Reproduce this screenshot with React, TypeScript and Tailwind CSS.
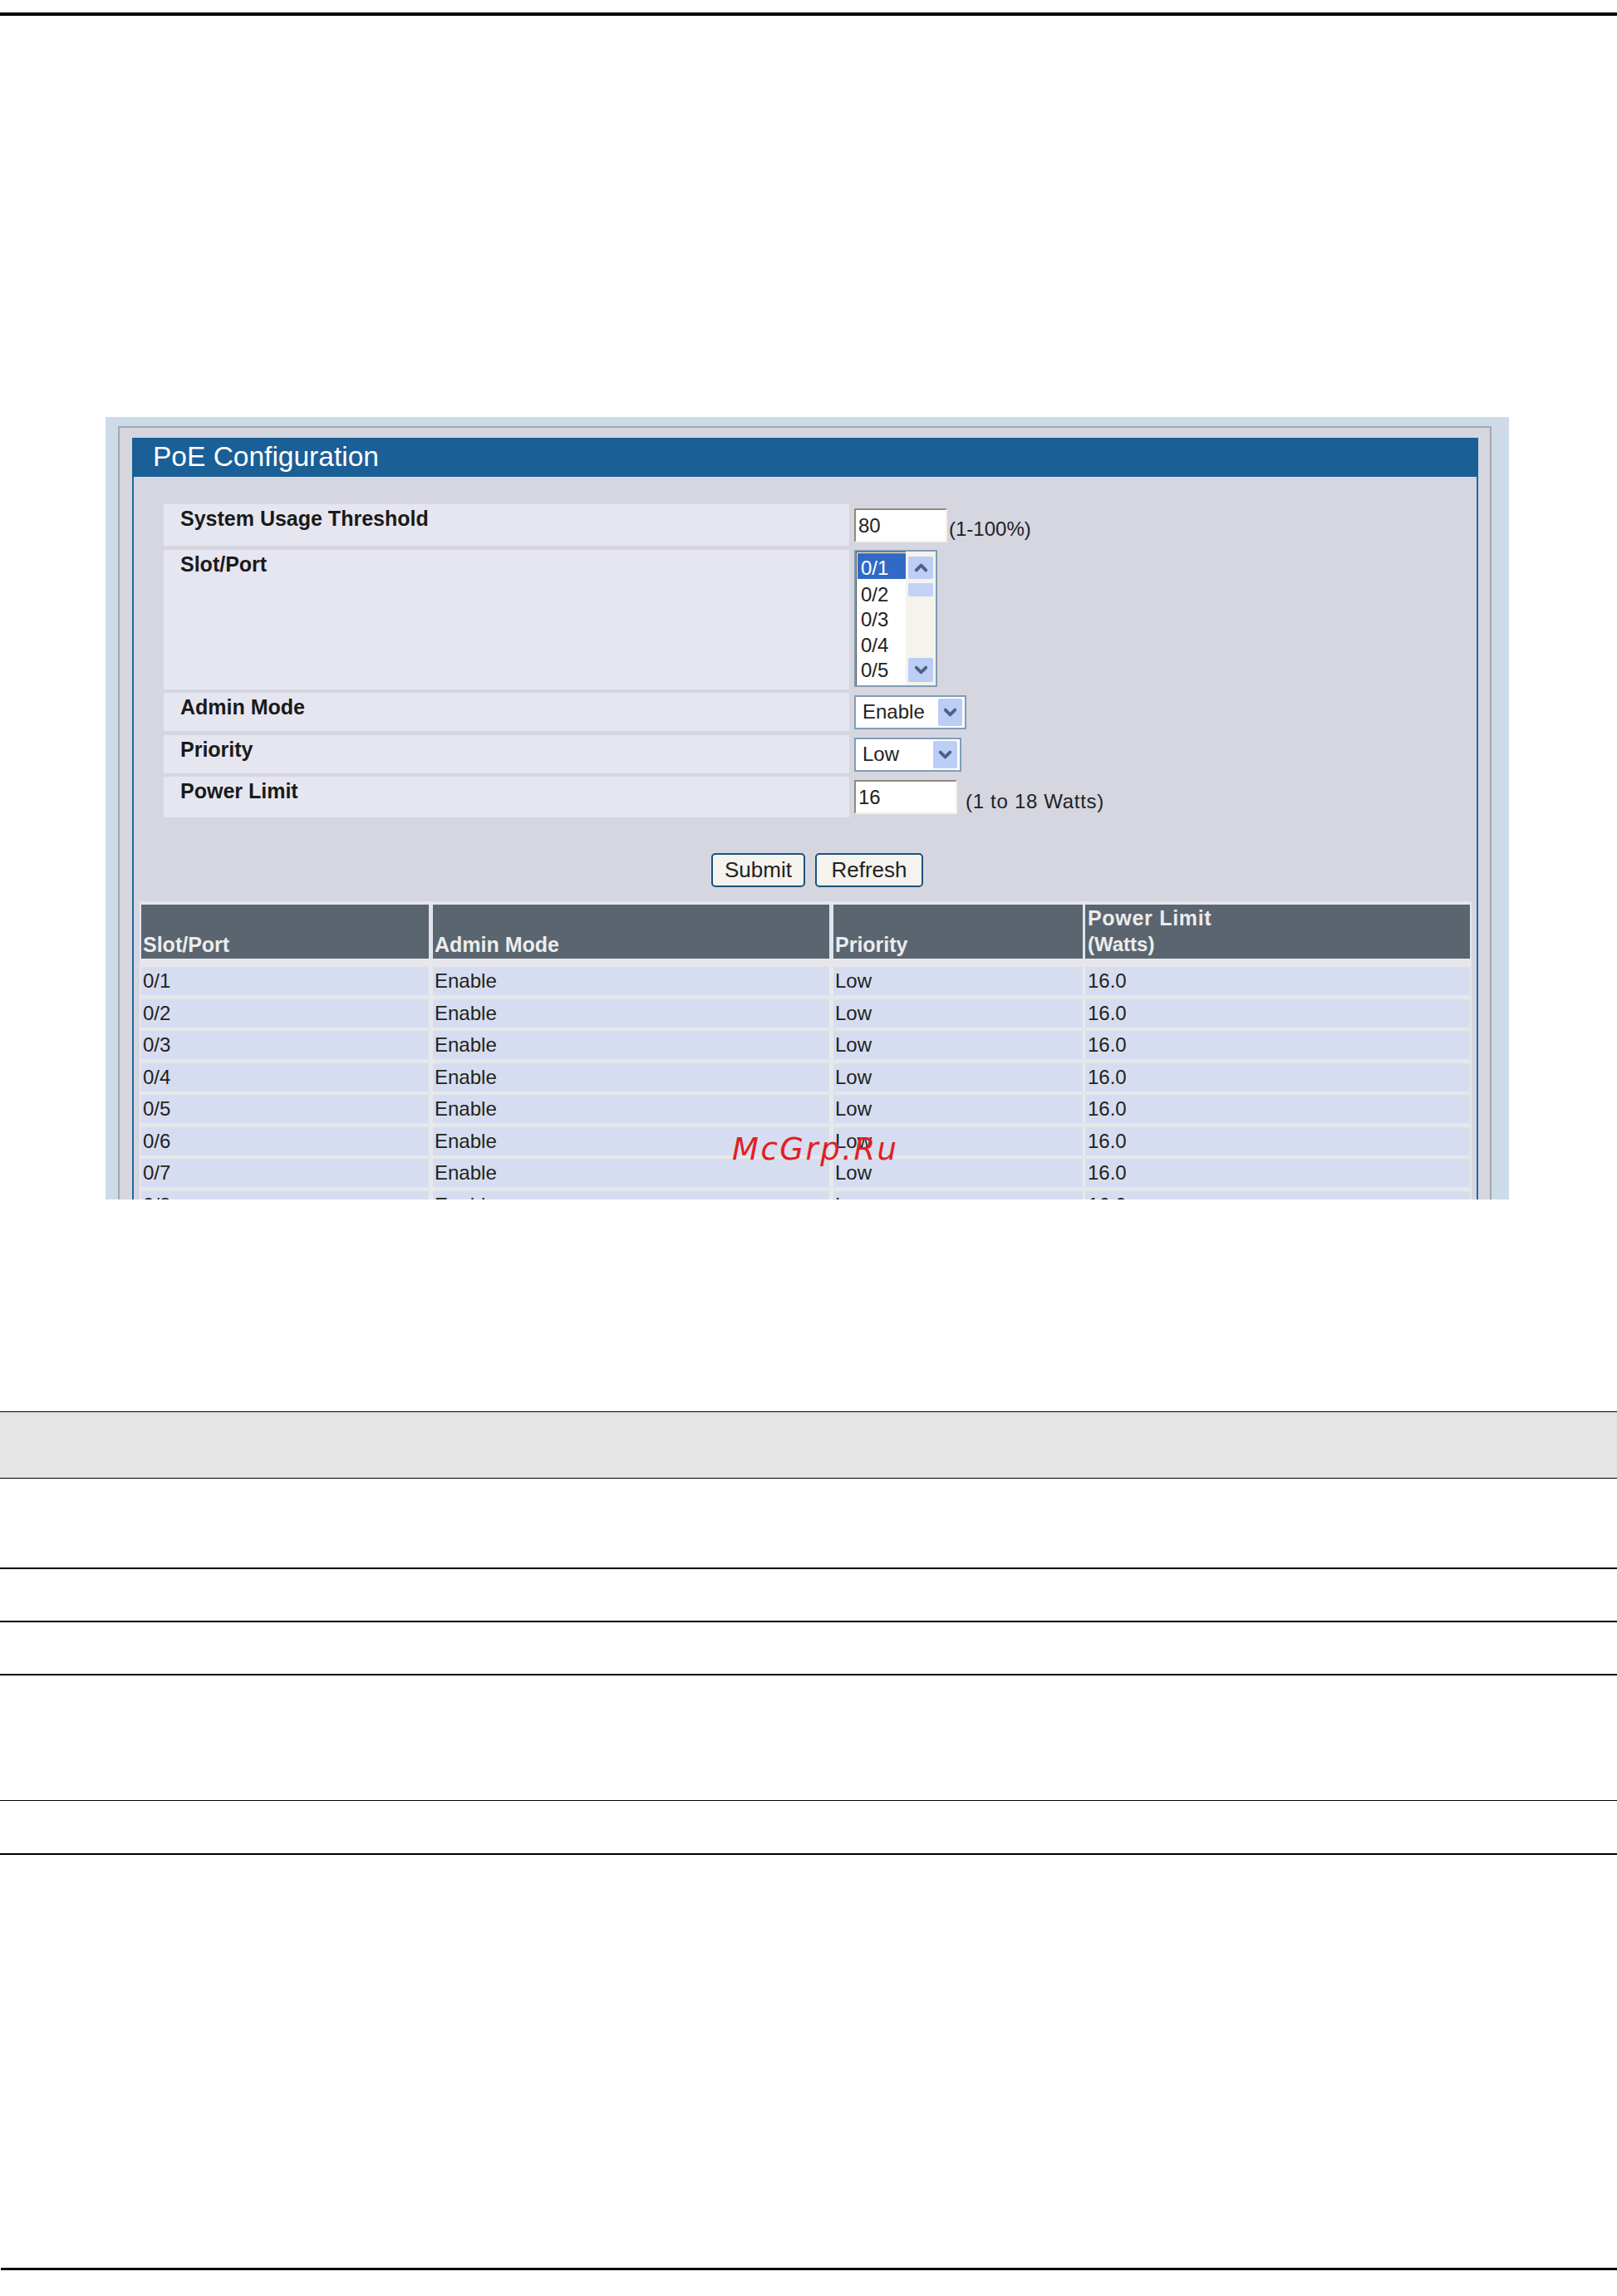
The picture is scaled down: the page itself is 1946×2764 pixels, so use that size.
import { ChevronDown, ChevronUp } from "lucide-react";

const ports = ["0/1", "0/2", "0/3", "0/4", "0/5", "0/6", "0/7", "0/8"];

function TextBox({ value, width }: { value: string; width: string }) {
  return (
    <div className={`${width} h-[41px] border-2 border-t-[#8f8b7d] border-l-[#8f8b7d] border-r-[#f3f1e6] border-b-[#f3f1e6] bg-white pl-[3px] text-[24px] leading-[37px] text-[#222]`}>
      {value}
    </div>
  );
}

function ArrowButton({ up }: { up?: boolean }) {
  const Icon = up ? ChevronUp : ChevronDown;
  return (
    <div className="flex items-center justify-center rounded-[2px] bg-[#bccdf6] w-full h-full">
      <Icon className="w-[23px] h-[23px] text-[#4d6185]" strokeWidth={4} />
    </div>
  );
}

function Dropdown({ value, width }: { value: string; width: string }) {
  return (
    <div className={`${width} h-[41px] flex justify-between border-2 border-[#7f9db9] bg-white p-[2px] pr-[3px] text-[24px] leading-[32px] text-[#222]`}>
      <span className="pl-[6px]">{value}</span>
      <div className="w-[29px]">
        <ArrowButton />
      </div>
    </div>
  );
}

function PortList() {
  return (
    <div className="w-[100px] h-[165px] flex border-2 border-[#7f9db9] bg-white">
      <div className="w-[60px] border-t border-l border-[#555] pt-[1px] pl-[1px] text-[24px] text-[#222] overflow-hidden">
        {ports.slice(0, 5).map((p, i) => (
          <div key={p} className={i === 0 ? "h-[31px] pl-[4px] leading-[36px] bg-[#316ac5] text-white" : "h-[30.5px] pl-[4px] leading-[37px]"}>
            {p}
          </div>
        ))}
      </div>
      <div className="flex-1 flex flex-col bg-[#f5f3ec] px-[3px] pt-[6px] pb-[4px]">
        <div className="h-[27px]">
          <ArrowButton up />
        </div>
        <div className="h-[16px] mt-[5px] rounded-[2px] bg-[#c3d3f6]" />
        <div className="h-[29px] mt-auto">
          <ArrowButton />
        </div>
      </div>
    </div>
  );
}

function FormRow({ label, height, children }: { label: string; height: string; children: React.ReactNode }) {
  return (
    <div className={`flex ${height}`}>
      <div className="w-[825px] shrink-0 bg-[#e6e6f0] pl-[20px] text-[25px] leading-[35px] font-bold text-[#1a1a1a]">
        {label}
      </div>
      <div className="pl-[6px]">{children}</div>
    </div>
  );
}

const cols = [
  "w-[351px] border-r-[5px] pl-[2px]",
  "w-[482px] border-r-[5px] pl-[2px]",
  "w-[303px] border-r-[3px] pl-[2px]",
  "w-[463px] pl-[3px]",
];

function HeaderRow() {
  const heads = ["Slot/Port", "Admin Mode", "Priority", "Power Limit"];
  return (
    <div className="flex h-[65px] mb-[10px]">
      {heads.map((h, i) => (
        <div key={h} className={`${cols[i]} border-[#e2e4ea] bg-[#5a6570] flex flex-col justify-end pb-[1px] text-[25px] leading-[32px] font-bold text-[#ececec]`}>
          <span className={i === 3 ? "tracking-[0.7px]" : ""}>{h}</span>
          {i === 3 && <span className="text-[24px]">(Watts)</span>}
        </div>
      ))}
    </div>
  );
}

function DataRow({ port }: { port: string }) {
  const cells = [port, "Enable", "Low", "16.0"];
  return (
    <div className="flex h-[34px] mb-[4.5px]">
      {cells.map((c, i) => (
        <div key={i} className={`${cols[i]} border-[#e8e9ee] bg-[#d7ddf0] text-[24px] leading-[33px] text-[#222]`}>
          {c}
        </div>
      ))}
    </div>
  );
}

export default function App() {
  return (
    <div className="relative w-[1946px] h-[2764px] overflow-hidden bg-white pt-[15px] font-['Liberation_Sans',sans-serif]">
      <div className="h-[4px] bg-black" />

      {/* screenshot panel */}
      <div className="ml-[127px] mt-[483px] w-[1689px] h-[942px] overflow-hidden bg-[#cddbe8] pl-[15px] pr-[21px] pt-[11px]">
        <div className="h-full border-2 border-b-0 border-[#a3a8ae] bg-[#d5d6e0] pl-[15px] pr-[14px] pt-[12px]">
          <div className="h-[47px] bg-[#1a5f96] pl-[25px] text-[33.5px] leading-[46px] text-white">PoE Configuration</div>
          <div className="h-full border-x-2 border-[#1f6a99] pt-[33px]">
            <div className="flex flex-col gap-[4.5px] pl-[36px]">
              <FormRow label="System Usage Threshold" height="h-[50px]">
                <div className="flex pt-[5px]">
                  <TextBox value="80" width="w-[112px]" />
                  <span className="pl-[2px] pt-[9px] text-[24px] leading-[32px] text-[#222]">(1-100%)</span>
                </div>
              </FormRow>
              <FormRow label="Slot/Port" height="h-[168px]">
                <PortList />
              </FormRow>
              <FormRow label="Admin Mode" height="h-[46px]">
                <div className="pt-[3px]">
                  <Dropdown value="Enable" width="w-[135px]" />
                </div>
              </FormRow>
              <FormRow label="Priority" height="h-[46px]">
                <div className="pt-[3px]">
                  <Dropdown value="Low" width="w-[129px]" />
                </div>
              </FormRow>
              <FormRow label="Power Limit" height="h-[49px]">
                <div className="flex pt-[4px]">
                  <TextBox value="16" width="w-[124px]" />
                  <span className="pl-[10px] pt-[10px] text-[24px] leading-[32px] tracking-[0.7px] text-[#222]">(1 to 18 Watts)</span>
                </div>
              </FormRow>
            </div>

            <div className="flex gap-[12px] pl-[695px] mt-[43px]">
              <button className="w-[113px] h-[41px] rounded-[5px] border-2 border-[#1c5180] bg-[#f4f3ee] text-[26px] leading-[29px] text-[#222]">Submit</button>
              <button className="w-[130px] h-[41px] rounded-[5px] border-2 border-[#1c5180] bg-[#f4f3ee] text-[26px] leading-[29px] text-[#222]">Refresh</button>
            </div>

            <div className="ml-[7px] mt-[17px] w-[1603px] bg-[#e6e7ec] px-[2px] pt-[4px]">
              <HeaderRow />
              {ports.map((p) => (
                <DataRow key={p} port={p} />
              ))}
            </div>
          </div>
        </div>
      </div>

      {/* empty table from the page */}
      <div className="mt-[255px]">
        <div className="h-[81px] border-y border-black bg-[#e5e5e5]" />
        <div className="h-[109px] border-b-2 border-black" />
        <div className="h-[64px] border-b-2 border-black" />
        <div className="h-[64px] border-b-2 border-black" />
        <div className="h-[151px] border-b border-black" />
        <div className="h-[65px] border-b-2 border-black" />
      </div>

      <div className="ml-[1px] mt-[497px] h-[3px] bg-black" />

      {/* watermark */}
      <div className="absolute left-[881px] top-[1360px] text-[37px] leading-[48px] italic tracking-[2.5px] text-[#e02020] font-['DejaVu_Sans',sans-serif]">
        McGrp.Ru
      </div>
    </div>
  );
}
